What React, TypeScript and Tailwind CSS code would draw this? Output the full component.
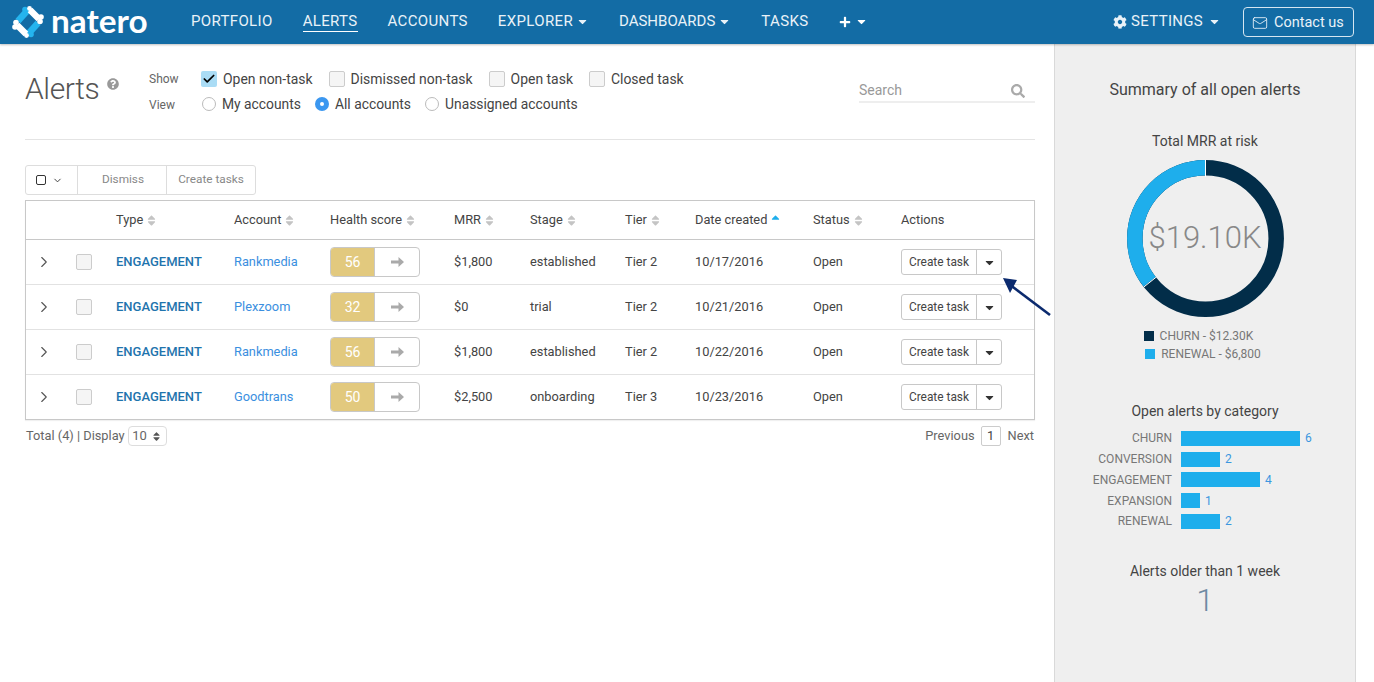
import React from 'react';
import { ChevronRight, ChevronDown, Mail, Check } from 'lucide-react';
import { FaCog, FaSearch, FaQuestionCircle, FaCaretDown, FaSort, FaSortUp, FaPlus } from 'react-icons/fa';

const navItems = [
  { label: 'PORTFOLIO', track: 'tracking-[0.35px]' },
  { label: 'ALERTS', track: 'tracking-[0.35px]', active: true },
  { label: 'ACCOUNTS', track: 'tracking-[0.35px]' },
  { label: 'EXPLORER', track: 'tracking-[0.35px]', caret: true },
  { label: 'DASHBOARDS', track: 'tracking-[0px]', caret: true },
  { label: 'TASKS', track: 'tracking-[0.35px]' },
];

const rows = [
  { account: 'Rankmedia', score: 56, mrr: '$1,800', stage: 'established', tier: 'Tier 2', date: '10/17/2016' },
  { account: 'Plexzoom', score: 32, mrr: '$0', stage: 'trial', tier: 'Tier 2', date: '10/21/2016' },
  { account: 'Rankmedia', score: 56, mrr: '$1,800', stage: 'established', tier: 'Tier 2', date: '10/22/2016' },
  { account: 'Goodtrans', score: 50, mrr: '$2,500', stage: 'onboarding', tier: 'Tier 3', date: '10/23/2016' },
];

const bars = [
  { label: 'CHURN', width: 119, count: 6 },
  { label: 'CONVERSION', width: 39, count: 2 },
  { label: 'ENGAGEMENT', width: 79, count: 4 },
  { label: 'EXPANSION', width: 19, count: 1 },
  { label: 'RENEWAL', width: 39, count: 2 },
];

const gridCols = 'grid grid-cols-[90px_118px_96px_124px_76px_95px_70px_118px_88px_1fr] items-center';

const Logo = () => (
  <svg width="32" height="32" viewBox="0 0 32 32" className="shrink-0">
    {/* four dog-bone strokes round a diamond hole */}
    <g stroke="#25b4ee" strokeWidth="6.5" fill="#25b4ee">
      <path d="M6 15 L15 5" />
      <path d="M26 17 L17 27" />
    </g>
    <g fill="#25b4ee">
      <circle cx="13" cy="3.5" r="2.8" />
      <circle cx="17" cy="5" r="2.6" />
      <circle cx="19" cy="28.5" r="2.8" />
      <circle cx="15" cy="27" r="2.6" />
    </g>
    <g stroke="#ffffff" strokeWidth="6.5" fill="none">
      <path d="M18 4 L27 13" />
      <path d="M14 28 L5 19" />
    </g>
    <g fill="#ffffff">
      <circle cx="29" cy="11" r="2.8" />
      <circle cx="28" cy="15.5" r="2.8" />
      <circle cx="3" cy="21" r="2.8" />
      <circle cx="4" cy="16.5" r="2.8" />
      <circle cx="17.5" cy="2.5" r="2.4" />
      <circle cx="14.5" cy="29.5" r="2.4" />
    </g>
  </svg>
);

const SortIcon = () => <FaSort className="text-[#c4c4c4] text-[13px] ml-[2px]" />;

const Box = () => <span className="block w-4 h-4 rounded-[2px] border border-[#ccc] bg-[#f5f5f5]" />;

const CheckItem = ({ label, checked }: { label: string; checked?: boolean }) => (
  <label className="flex items-center">
    {checked ? (
      <span className="flex items-center justify-center w-4 h-4 rounded-[2px] bg-[#aadcf5]">
        <Check className="w-3.5 h-3.5 text-black" strokeWidth={3} />
      </span>
    ) : (
      <Box />
    )}
    <span className="ml-[6px]">{label}</span>
  </label>
);

const RadioItem = ({ label, checked }: { label: string; checked?: boolean }) => (
  <label className="flex items-center">
    {checked ? (
      <span className="flex items-center justify-center w-[14px] h-[14px] rounded-full bg-[#3b97f0]">
        <span className="w-1 h-1 rounded-full bg-white" />
      </span>
    ) : (
      <span className="block w-[14px] h-[14px] rounded-full border border-[#bbb] bg-white" />
    )}
    <span className="ml-[6px]">{label}</span>
  </label>
);

const Donut = () => (
  <div className="relative w-[157px] h-[157px] mx-auto mt-[10px]">
    <svg width="157" height="157" viewBox="0 0 157 157" className="-rotate-90">
      <circle cx="78.5" cy="78.5" r="70.7" fill="none" stroke="#022d49" strokeWidth="15.5" />
      <circle cx="78.5" cy="78.5" r="70.7" fill="none" stroke="#1eaeec" strokeWidth="15.5" strokeDasharray="158.2 444.2" strokeDashoffset="-286" />
      <line x1="140" y1="78.5" x2="157" y2="78.5" stroke="#fff" strokeWidth="1" />
      <line x1="40" y1="29.4" x2="30" y2="16.8" stroke="#fff" strokeWidth="1" />
    </svg>
    <div className="absolute inset-0 flex items-center justify-center font-light text-[31px] text-[#888]">$19.10K</div>
  </div>
);

export default function App() {
  return (
    <div className="h-[682px] overflow-hidden bg-white text-[#444] text-[14px] font-['Roboto',sans-serif]">
      <header className="relative z-10 h-[44px] bg-[#136ca5] flex items-center text-white shadow-[0_1px_2px_rgba(0,0,0,0.25)]">
        <div className="flex items-center ml-[12px] w-[179px]">
          <Logo />
          <span className="ml-[7px] font-['Lato',sans-serif] font-bold text-[33.3px] leading-none -mt-[2px]">natero</span>
        </div>
        <nav className="flex items-center gap-[30px] text-[15px] -mt-[1px]">
          {navItems.map((item) => (
            <span
              key={item.label}
              className={`flex items-center h-[21px] text-[#e9f2f8] ${item.track} ${item.active ? 'border-b border-white' : ''}`}
            >
              {item.label}
              {item.caret && <FaCaretDown className="ml-[3px] text-[13px]" />}
            </span>
          ))}
          <span className="flex items-center">
            <FaPlus className="text-[12px]" />
            <FaCaretDown className="ml-[4px] text-[13px]" />
          </span>
        </nav>
        <div className="ml-auto flex items-center">
          <span className="flex items-center text-[15px] tracking-[0.3px] text-[#e9f2f8] -mt-[1px]">
            <FaCog className="text-[14px] mr-[4px]" />
            SETTINGS
            <FaCaretDown className="ml-[5px] text-[13px]" />
          </span>
          <span className="flex items-center h-[30px] w-[111px] ml-[22px] mr-[20px] rounded-[4px] border border-[#d5e6f1] pl-[8px] pt-[1px] text-[#e9f2f8] text-[14.5px]">
            <Mail className="w-[16px] h-[16px] mr-[6px]" strokeWidth={1.3} />
            Contact us
          </span>
        </div>
      </header>

      <div className="flex h-[638px]">
        <main className="w-[1054px] shrink-0 pl-[25px] pr-[19px]">
          <div className="h-[96px] border-b border-[#e4e4e4] flex items-start">
            <div className="flex items-start w-[124px] mt-[25px]">
              <h1 className="font-light text-[30px] leading-[40px] tracking-[-0.4px] text-[#555]">Alerts</h1>
              <FaQuestionCircle className="text-[12px] text-[#999] ml-[8px] mt-[9px]" />
            </div>
            <div className="mt-[26px] text-[12px] text-[#666] w-[52px]">
              <div className="h-[18px] leading-[18px]">Show</div>
              <div className="h-[18px] leading-[18px] mt-[8px]">View</div>
            </div>
            <div className="mt-[26px]">
              <div className="flex items-center gap-[16px] h-[18px] text-[13.95px]">
                <CheckItem label="Open non-task" checked />
                <CheckItem label="Dismissed non-task" />
                <CheckItem label="Open task" />
                <CheckItem label="Closed task" />
              </div>
              <div className="flex items-center gap-[14px] h-[18px] mt-[7px] ml-px text-[13.85px]">
                <RadioItem label="My accounts" />
                <RadioItem label="All accounts" checked />
                <RadioItem label="Unassigned accounts" />
              </div>
            </div>
            <div className="ml-auto mt-[38px] w-[176px] h-[21px] border-b-2 border-[#eee] flex items-center justify-between pr-[10px]">
              <span className="text-[#999] -mt-[2px]">Search</span>
              <FaSearch className="text-[14px] text-[#aaa] -mt-[2px]" />
            </div>
          </div>

          <div className="mt-[25px] flex w-[231px] h-[30px] border border-[#ddd] rounded-[3px] text-[11.8px] text-[#888]">
            <span className="w-[52px] flex items-center pl-[10px] border-r border-[#ddd]">
              <span className="block w-[10px] h-[10px] rounded-[2px] border border-[#333]" />
              <ChevronDown className="w-[11px] h-[11px] ml-[6px] text-[#333]" />
            </span>
            <span className="w-[89px] flex items-center justify-center pl-[2px] border-r border-[#ddd]">Dismiss</span>
            <span className="flex-1 flex items-center justify-center">Create tasks</span>
          </div>

          <div className="mt-[5px] border border-[#c8c8c8] shadow-[0_1px_1px_rgba(0,0,0,0.06)] text-[12.8px]">
            <div className={`${gridCols} h-[39px] border-b border-[#c8c8c8]`}>
              <span />
              <span className="col-start-2 flex items-center">Type<SortIcon /></span>
              <span className="flex items-center">Account<SortIcon /></span>
              <span className="flex items-center">Health score<SortIcon /></span>
              <span className="flex items-center">MRR<SortIcon /></span>
              <span className="flex items-center">Stage<SortIcon /></span>
              <span className="flex items-center">Tier<SortIcon /></span>
              <span className="flex items-center">Date created<FaSortUp className="text-[#1eaeec] text-[13px] ml-[2px]" /></span>
              <span className="flex items-center">Status<SortIcon /></span>
              <span>Actions</span>
            </div>
            {rows.map((row, i) => (
              <div key={i} className={`${gridCols} ${i > 0 ? 'h-[45px] border-t border-[#e2e2e2]' : 'h-[44px]'}`}>
                <span className="flex items-center">
                  <ChevronRight className="w-[18px] h-[18px] ml-[9px] text-[#555]" strokeWidth={1.5} />
                  <span className="ml-[23px]"><Box /></span>
                </span>
                <span className="font-medium text-[#1f74ad] text-[13px]">ENGAGEMENT</span>
                <span className="text-[#3b8fe0]">{row.account}</span>
                <span className="flex w-[90px] h-[30px] rounded-[4px] border border-[#c8c8c8] overflow-hidden">
                  <span className="w-[44px] bg-[#e2c97e] text-white text-[14px] flex items-center justify-center border-r border-[#c8c8c8]">{row.score}</span>
                  <span className="flex-1 flex items-center justify-center">
                    <svg width="13" height="10" viewBox="0 0 13 10">
                      <path d="M0 3.4H7.5V0L13 5 7.5 10V6.6H0Z" fill="#aaa" />
                    </svg>
                  </span>
                </span>
                <span>{row.mrr}</span>
                <span>{row.stage}</span>
                <span>{row.tier}</span>
                <span>{row.date}</span>
                <span>Open</span>
                <span className="flex w-[101px] h-[26px] rounded-[3px] border border-[#c8c8c8] text-[11.9px]">
                  <span className="w-[75px] flex items-center justify-center pt-[1px] border-r border-[#c8c8c8]">Create task</span>
                  <span className="flex-1 flex items-center justify-center">
                    <FaCaretDown className="text-[13px] text-[#333]" />
                  </span>
                </span>
              </div>
            ))}
          </div>

          <div className="flex items-center justify-between mt-[6px] text-[12.8px] text-[#666]">
            <div className="flex items-center">
              <span className="ml-px">Total (4) | Display</span>
              <span className="flex items-center justify-center gap-[4px] ml-[3px] w-[39px] h-[20px] rounded-[4px] border border-[#ddd] text-[13px]">
                10
                <FaSort className="text-[11px] text-[#555]" />
              </span>
            </div>
            <div className="flex items-center mr-px">
              Previous
              <span className="flex items-center justify-center w-[20px] h-[20px] ml-[6px] mr-[7px] border border-[#ccc] rounded-[2px] text-[#444]">1</span>
              Next
            </div>
          </div>
        </main>

        <aside className="w-[302px] shrink-0 bg-[#efefef] border-x border-[#d9d9d9] text-center">
          <h2 className="mt-[36px] text-[16px] leading-[20px] text-[#444]">Summary of all open alerts</h2>
          <h3 className="mt-[32px] text-[14px] leading-[18px] text-[#444]">Total MRR at risk</h3>
          <Donut />
          <div className="mt-[10px] text-[12px] text-[#777] leading-[18px]">
            <div className="flex items-center justify-center -ml-[13px]">
              <span className="w-[10px] h-[10px] bg-[#022d49] mr-[6px]" />CHURN - $12.30K
            </div>
            <div className="flex items-center justify-center -ml-[4px]">
              <span className="w-[10px] h-[10px] bg-[#1eaeec] mr-[6px]" />RENEWAL - $6,800
            </div>
          </div>
          <h3 className="mt-[39px] text-[14px] leading-[18px] text-[#444]">Open alerts by category</h3>
          <div className="mt-[8px] text-[12px] text-[#777]">
            {bars.map((bar) => (
              <div key={bar.label} className="flex items-center h-[20.75px]">
                <span className="w-[117px] text-right">{bar.label}</span>
                <span className="h-[15px] ml-[9px] bg-[#1eaeec]" style={{ width: bar.width }} />
                <span className="ml-[5px] text-[#3b97e0]">{bar.count}</span>
              </div>
            ))}
          </div>
          <h3 className="mt-[30px] text-[14px] leading-[18px] text-[#444]">Alerts older than 1 week</h3>
          <div className="mt-[1px] font-light text-[32px] leading-[38px] text-[#6d8aa3]">1</div>
        </aside>
      </div>

      <svg width="52" height="42" viewBox="0 0 52 42" className="absolute left-[1001px] top-[277px] z-20">
        <path d="M49 38 L8 7" stroke="#0b2a6e" strokeWidth="2.6" fill="none" />
        <path d="M2 1 L16 3 L9 16 Z" fill="#0b2a6e" />
      </svg>
    </div>
  );
}
